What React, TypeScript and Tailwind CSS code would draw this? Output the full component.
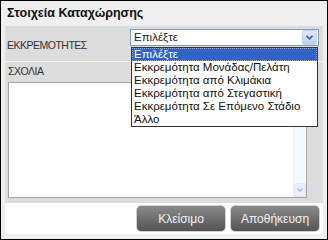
import { useState } from "react";

const options = [
  "Επιλέξτε",
  "Εκκρεμότητα Μονάδας/Πελάτη",
  "Εκκρεμότητα από Κλιμάκια",
  "Εκκρεμότητα από Στεγαστική",
  "Εκκρεμότητα Σε Επόμενο Στάδιο",
  "Άλλο",
];

function Chevron({ className }: { className?: string }) {
  return (
    <svg viewBox="0 0 10 8" className={className}>
      <polyline
        points="1.5,2 5,5.5 8.5,2"
        fill="none"
        stroke="currentColor"
        strokeWidth="2"
      />
    </svg>
  );
}

function App() {
  const [selected] = useState<number>(0);

  return (
    <div className="box-border w-screen h-screen border border-black bg-[#efefef] flex flex-col px-[4px] pb-[5px] font-['Liberation_Sans',Arial,sans-serif] text-[11.5px] text-[#222]">
      <div className="shrink-0 h-[25px] flex items-center pl-[2px] font-bold text-[12.5px] text-[#111]">
        Στοιχεία Καταχώρησης
      </div>

      <div className="flex-1 flex flex-col bg-[#dcdcdc]">
        <div className="shrink-0 h-[35px] flex items-start">
          <div className="w-[125px] pl-[2px] pt-[12px] text-[10.5px] tracking-[-0.5px] text-[#333]">
            ΕΚΚΡΕΜΟΤΗΤΕΣ
          </div>
          <div className="relative mt-[3px] flex-1 mr-[4px] h-[17px] bg-white border border-[#7f9db9] flex items-center">
            <span className="pl-[3px] flex-1">{options[selected]}</span>
            <div className="w-[15px] h-[15px] mr-px rounded-[2px] border border-[#c3d3fd] bg-linear-to-b from-[#dfe9ff] to-[#b9cdf5] flex items-center justify-center text-[#4d6185]">
              <Chevron className="w-[9px] h-[7px]" />
            </div>
            <div className="absolute left-0 right-0 top-[17px] bg-white border border-[#333] z-10">
              {options.map((o, i) => (
                <div
                  key={o}
                  className={
                    i === selected
                      ? "h-[13px] leading-[13px] px-[2px] bg-[#3163c9] text-white outline-1 outline-dotted outline-[#aab] -outline-offset-1"
                      : "h-[13px] leading-[13px] px-[2px] text-[#111]"
                  }
                >
                  {o}
                </div>
              ))}
            </div>
          </div>
        </div>

        <div className="shrink-0 h-px bg-[#f4f4f4]" />

        <div className="flex-1 flex flex-col pl-[3px] pr-[16px] pb-[5px]">
          <div className="shrink-0 h-[20px] flex items-center text-[10.5px] tracking-[-0.5px] text-[#333]">
            ΣΧΟΛΙΑ
          </div>
          <div className="flex-1 bg-white border border-[#a5a5a5] flex justify-end">
            <div className="w-[13px] bg-[#f5f8fd] border-l border-[#eef2f9] flex flex-col justify-end">
              <div className="h-[14px] rounded-[2px] bg-[#eaf0fb] border border-[#dde6f7] flex items-center justify-center text-[#a9bde4]">
                <Chevron className="w-[8px] h-[6px]" />
              </div>
            </div>
          </div>
        </div>
      </div>

      <div className="shrink-0 h-[31px] bg-white flex items-center justify-end gap-[4px] pr-[3px]">
        <button className="w-[90px] h-[27px] rounded-[5px] border border-[#cfcfcf] bg-linear-to-b from-[#8a8a8a] to-[#545454] text-[#f2f2f2] text-[12px]">
          Κλείσιμο
        </button>
        <button className="w-[90px] h-[27px] rounded-[5px] border border-[#cfcfcf] bg-linear-to-b from-[#8a8a8a] to-[#545454] text-[#f2f2f2] text-[12px]">
          Αποθήκευση
        </button>
      </div>
    </div>
  );
}

export default App;
